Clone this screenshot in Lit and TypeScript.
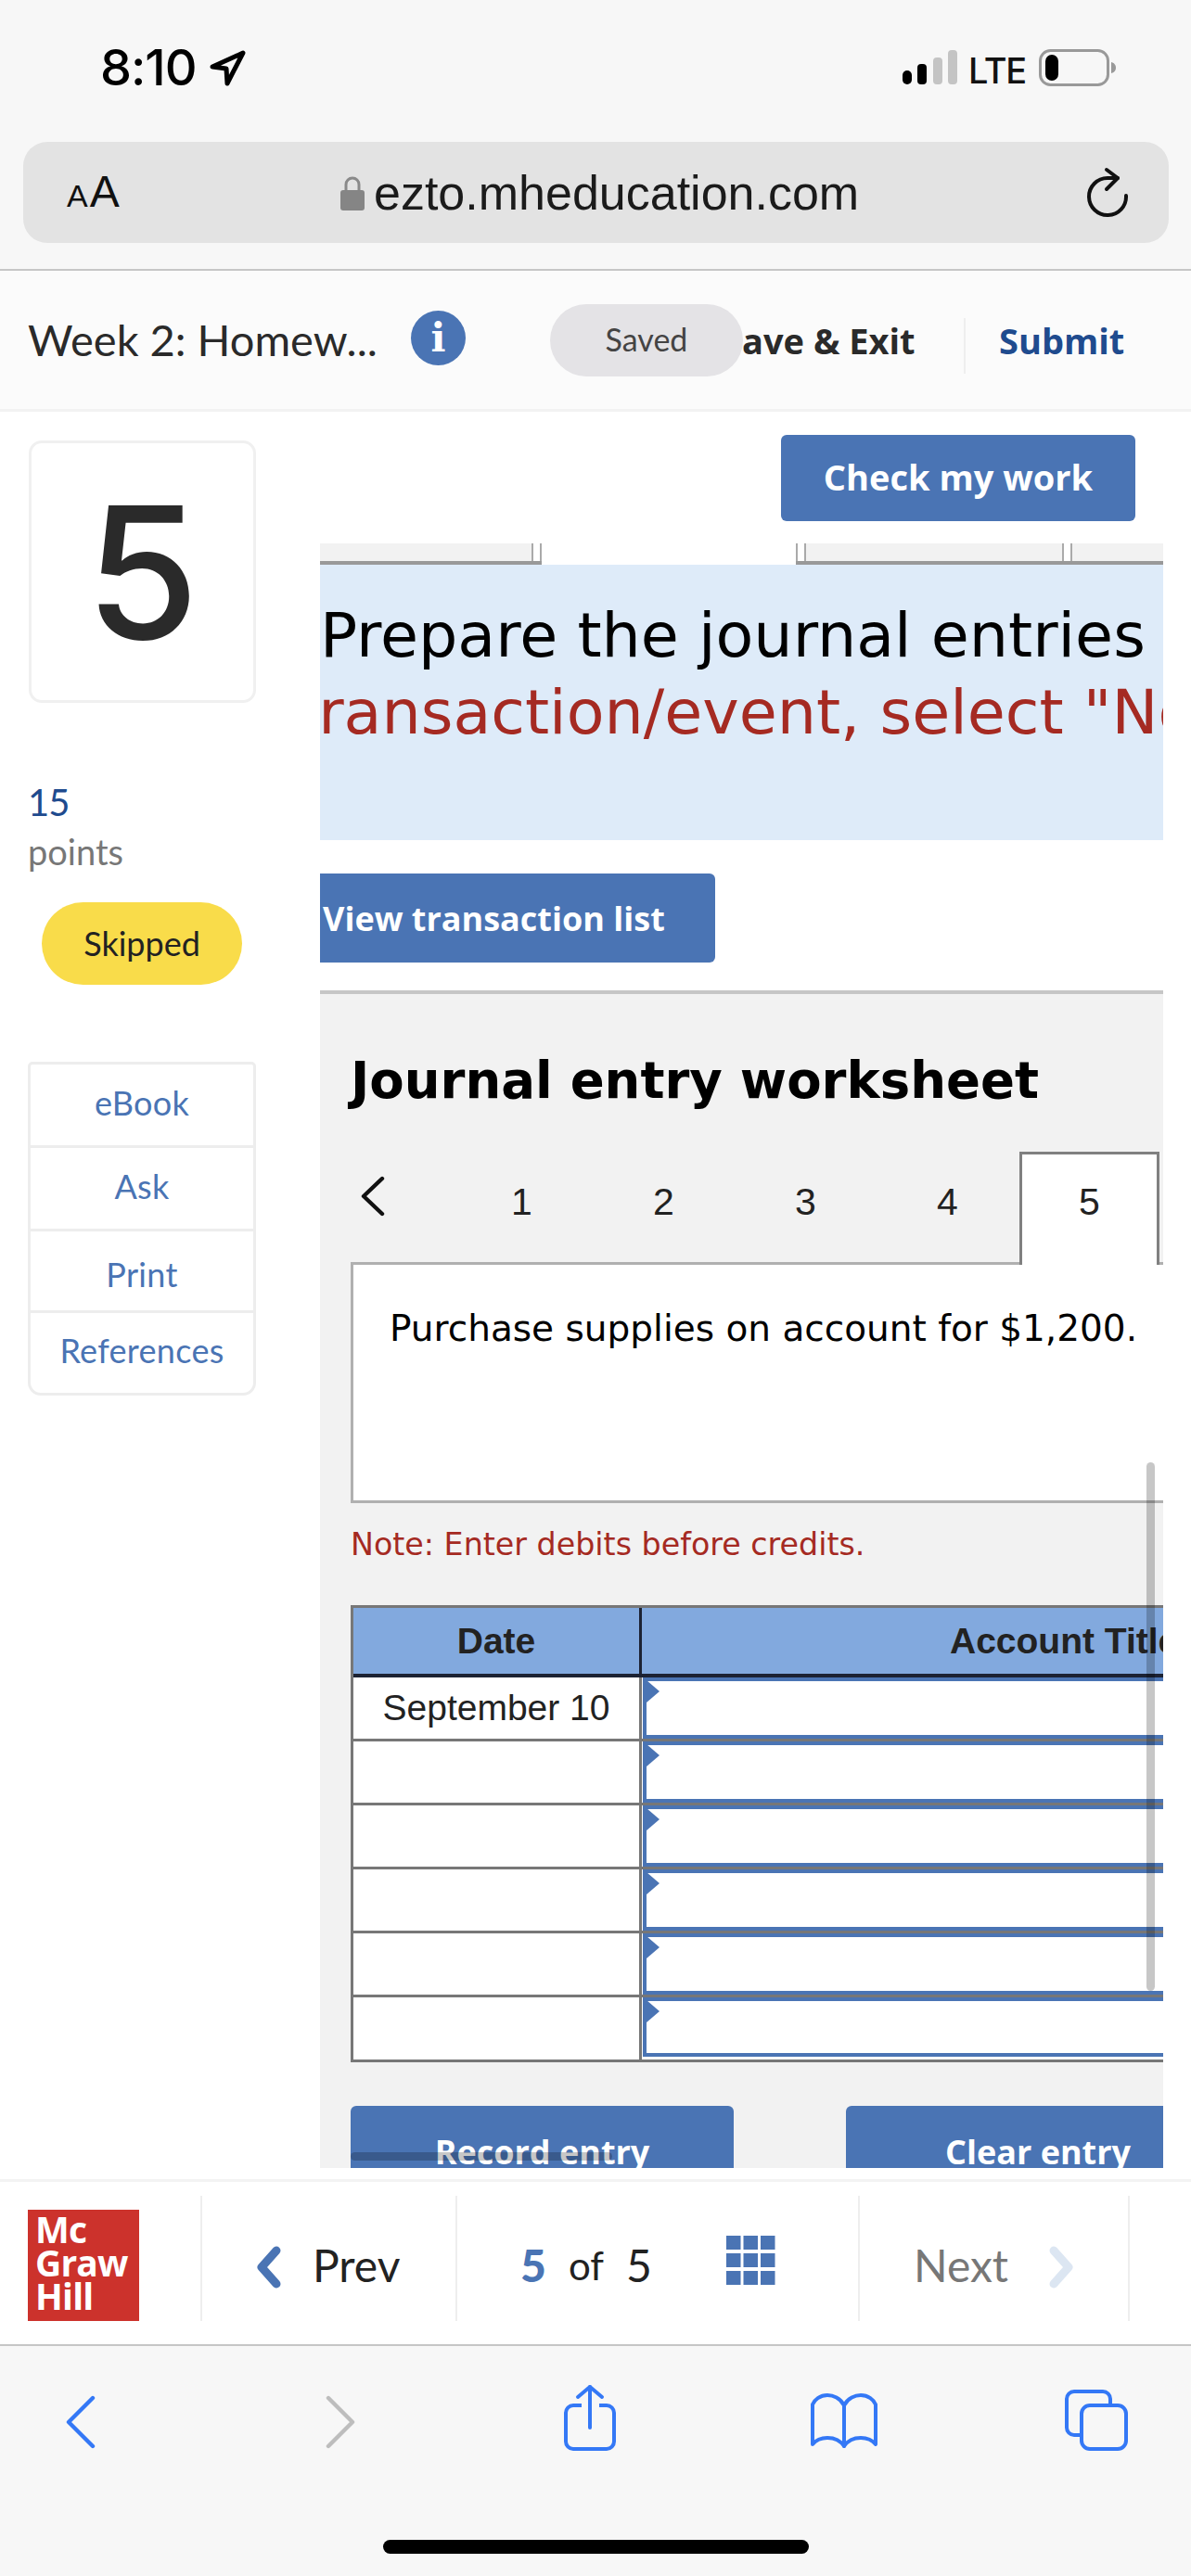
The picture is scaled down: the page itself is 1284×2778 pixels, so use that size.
import { LitElement, html, css, svg } from "lit";
import { customElement } from "lit/decorators.js";

@customElement("app-root")
export class AppRoot extends LitElement {
  static styles = css`
    :host { display: block; width: 1284px; height: 2778px; overflow: hidden; background: #fff; font-family: "Inter", "Liberation Sans", sans-serif; color: #222; }
    * { box-sizing: border-box; }
    svg { display: block; flex: none; }

    .chrome-top { height: 292px; background: #f7f7f7; border-bottom: 2px solid #c6c6c6; padding: 53px 24px 0 25px; }
    .status { height: 100px; display: flex; align-items: flex-start; position: relative; }
    .time { margin-left: 83px; font-size: 54px; line-height: 40px; font-weight: 500; letter-spacing: -1px; color: #000; width: 116px; }
    .status-right { margin-left: auto; margin-right: 56px; display: flex; align-items: flex-start; }
    .lte { font-size: 38px; font-weight: 500; line-height: 40px; margin: 3px 14px 0 11px; width: 62px; color: #111; letter-spacing: -1.2px; white-space: nowrap; }
    .url { height: 109px; background: #e3e3e3; border-radius: 26px; display: flex; align-items: center; position: relative; padding-left: 47px; }
    .aa { width: 295px; font-family: "Liberation Sans", sans-serif; color: #111; font-size: 48px; line-height: 50px; margin-top: 2px; }
    .aa small { font-size: 34px; margin-right: 2px; }
    .domain { font-size: 52px; margin-left: 10px; color: #1b1b1b; flex: 1; line-height: 60px; font-family: "Liberation Sans", sans-serif; }

    .appbar { height: 152px; background: #fbfbfb; border-bottom: 3px solid #f2f2f2; display: flex; align-items: center; position: relative; padding: 0 0 0 30px; }
    .title { font-family: "Lato", sans-serif; font-size: 47px; width: 413px; margin-top: -2px; color: #2a2a2a; white-space: nowrap; }
    .info { width: 59px; height: 59px; border-radius: 50%; background: #4a74b4; color: #fff; font-family: "DejaVu Serif", serif; font-weight: 700; font-size: 42px; display: flex; align-items: center; justify-content: center; margin-top: -4px; }
    .save { position: absolute; left: 800px; top: 55px; font-family: "Open Sans", sans-serif; font-weight: 700; font-size: 38px; line-height: 40px; white-space: nowrap; color: #2a2a2a; }
    .pill-saved { position: absolute; left: 593px; top: 36px; width: 208px; height: 78px; border-radius: 39px; background: #e4e3e6; font-family: "Lato", sans-serif; font-size: 34px; color: #444; display: flex; align-items: center; justify-content: center; padding-bottom: 4px; }
    .vsep { position: absolute; left: 1039px; top: 51px; width: 2px; height: 60px; background: #eee; }
    .submit { position: absolute; left: 1077px; top: 55px; font-family: "Open Sans", sans-serif; font-weight: 700; font-size: 38px; line-height: 40px; color: #1f4b8e; }

    .main { height: 1906px; display: flex; padding: 25px 30px 0 31px; }
    .side { width: 245px; margin-right: 69px; display: flex; flex-direction: column; }
    .qnum { height: 283px; margin-top: 6px; border: 3px solid #f0f0f0; border-radius: 14px; display: flex; align-items: center; justify-content: center; font-size: 198px; line-height: 200px; font-family: "Inter", sans-serif; font-weight: 500; color: #2a2a2a; }
    .pts { margin: 84px 0 0 -1px; font-family: "Lato", sans-serif; font-size: 40px; letter-spacing: -1px; line-height: 46px; color: #1f4b8e; }
    .ptl { margin: 7px 0 0 -1px; font-family: "Lato", sans-serif; font-size: 38px; line-height: 46px; color: #777; }
    .skipped { margin: 32px 0 0 14px; width: 216px; height: 89px; border-radius: 45px; background: #f9dc4a; display: flex; align-items: center; justify-content: center; padding-bottom: 2px; font-family: "Lato", sans-serif; font-size: 36px; color: #222; }
    .navlist { margin-top: 83px; border: 3px solid #ededed; border-radius: 5px 5px 14px 14px; display: flex; flex-direction: column; margin-left: -1px; width: 246px; }
    .navlist div { height: 90px; display: flex; align-items: center; justify-content: center; font-family: "Lato", sans-serif; font-size: 36px; letter-spacing: .3px; color: #4a74b4; border-bottom: 3px solid #ededed; padding-bottom: 6px; }
    .navlist div:nth-child(3) { height: 88px; padding: 6px 0 0; }
    .navlist div:last-child { border-bottom: 0; height: 86px; padding-bottom: 6px; }

    .col { width: 909px; display: flex; flex-direction: column; position: relative; overflow: hidden; }
    .checkrow { display: flex; justify-content: flex-end; padding-right: 30px; height: 117px; flex: none; }
    .btn { background: #4a74b4; color: #fff; border-radius: 6px; font-family: "Open Sans", sans-serif; font-weight: 700; display: flex; justify-content: center; align-items: center; flex: none; }
    .check { width: 382px; height: 93px; font-size: 38px; padding-bottom: 4px; }
    .stubs { height: 23px; flex: none; display: flex; }
    .stub { background: #f2f2f2; border-bottom: 4px solid #999; position: relative; }
    .stub.a { width: 239px; }
    .stub.gap { width: 274px; background: #fff; border: 0; }
    .stub.b { flex: 1; }
    .tick { position: absolute; top: 0; bottom: 0; width: 11px; border-left: 2px solid #aaa; border-right: 2px solid #aaa; background: #fff; }
    .band { height: 297px; flex: none; background: #deebf9; font-family: "DejaVu Sans", sans-serif; font-size: 66.7px; line-height: 83px; white-space: nowrap; overflow: hidden; padding-top: 35px; color: #000; }
    .band .red { color: #a52a22; margin-left: -28px; }
    .view { margin-top: 36px; width: 426px; height: 96px; font-size: 36px; justify-content: flex-start; padding-left: 3px; border-radius: 0 6px 6px 0; }
    .panel { flex: none; margin-top: 30px; height: 1270px; border-top: 4px solid #c6c6c6; background: #f2f2f2; padding: 0 0 0 33px; display: flex; flex-direction: column; position: relative; overflow: hidden; }
    .ws { font-family: "DejaVu Sans", sans-serif; font-weight: 700; font-size: 54.5px; line-height: 66px; margin-top: 60px; color: #000; white-space: nowrap; }
    .tabs { display: flex; margin-top: 44px; height: 119px; flex: none; align-items: stretch; position: relative; }
    .chev { width: 50px; padding: 26px 0 0 9px; }
    .tab { width: 153px; flex: none; font-family: "Liberation Sans", sans-serif; font-size: 41px; line-height: 41px; padding-top: 34px; text-align: center; color: #222; }
    .tabs .t1 { margin-left: 58px; }
    .tab.on { background: #fff; border: 3px solid #808080; border-bottom: 0; width: 151px; padding-top: 31px; position: relative; z-index: 1; margin: 0 0 -3px 1px; }
    .prompt { height: 260px; flex: none; background: #fff; border: 3px solid #b0b0b0; border-right: 0; padding: 47px 0 0 39px; font-family: "DejaVu Sans", sans-serif; font-size: 39px; line-height: 44px; color: #000; white-space: nowrap; }
    .note { font-family: "DejaVu Sans", sans-serif; font-size: 33.3px; line-height: 40px; margin-top: 25px; color: #a52a22; white-space: nowrap; }
    .tbl { margin-top: 45px; flex: none; width: 1000px; border: 3px solid #777; border-right: 0; font-family: "Liberation Sans", sans-serif; font-size: 39px; color: #222; }
    .tr { display: flex; height: 69px; border-bottom: 3px solid #777; background: #fff; }
    .tr:last-child { height: 67px; border-bottom: 0; }
    .tr.hd { height: 75px; background: #82a9de; border-bottom: 4px solid #1c2233; font-weight: 700; }
    .c1 { width: 311px; flex: none; display: flex; align-items: center; justify-content: center; border-right: 3px solid #777; }
    .hd .c1 { border-right-color: #1c2233; }
    .c2 { flex: 1; position: relative; }
    .hd .c2 { padding-left: 332px; display: flex; align-items: center; white-space: nowrap; }
    .inp { position: absolute; left: 1px; right: 0; top: 0; bottom: 0; border: 4px solid #4a74b4; border-right: 0; }
    .tr:last-child .inp { bottom: 3px; }
    .tri { position: absolute; left: 5px; top: 3px; width: 0; height: 0; border-left: 14px solid #4a74b4; border-top: 12px solid transparent; border-bottom: 12px solid transparent; }
    .actions { display: flex; margin-top: 47px; flex: none; }
    .act { height: 90px; align-items: flex-start; padding-top: 25px; font-size: 36px; line-height: 50px; }
    .act.r { width: 413px; margin-right: 121px; }
    .act.c { width: 400px; justify-content: flex-start; padding-left: 107px; }
    .vbar { position: absolute; left: 891px; top: 505px; width: 9px; height: 570px; border-radius: 5px; background: rgba(0,0,0,.22); }
    .hbar { position: absolute; left: 33px; top: 1249px; width: 282px; height: 9px; border-radius: 5px; background: rgba(0,0,0,.22); }

    .foot { height: 178px; border-top: 3px solid #f3f3f3; display: flex; position: relative; background: #fff; }
    .logo { position: absolute; left: 30px; top: 30px; width: 120px; height: 120px; background: #cc322c; color: #fff; font-family: "Open Sans", sans-serif; font-weight: 700; font-size: 39px; padding: 3px 0 0 8px; letter-spacing: -.8px; }
    .logo div { height: 36px; line-height: 36px; }
    .fsep { position: absolute; top: 15px; width: 2px; height: 135px; background: #eee; }
    .ftext { position: absolute; top: 62px; font-family: "Lato", sans-serif; font-size: 48px; line-height: 56px; white-space: nowrap; }
    .ftext.prev { left: 337px; color: #222; }
    .ftext.cur { left: 561px; color: #4a74b4; font-weight: 900; }
    .ftext.of { left: 613px; color: #222; font-size: 42px; }
    .ftext.tot { left: 675px; color: #222; }
    .ftext.next { left: 985px; color: #777; }
    .fic { position: absolute; }
    .chrome-bot { height: 250px; background: #f7f7f7; border-top: 2px solid #c6c6c6; position: relative; }
    .sic { position: absolute; }
    .home { position: absolute; left: 413px; top: 209px; width: 459px; height: 15px; border-radius: 8px; background: #000; }
  `;

  render() {
    const rows = ["September 10", "", "", "", "", ""];
    return html`
      <div class="chrome-top">
        <div class="status">
          <div class="time">8:10</div>
          <svg width="42" height="40" viewBox="0 0 42 40" style="margin-top:1px"><path d="M5 18 L38 3 L21 36 L20 20 Z" fill="none" stroke="#000" stroke-width="5" stroke-linejoin="round"/></svg>
          <div class="status-right">
            <svg width="60" height="40" viewBox="0 0 60 40"><rect x="0" y="23" width="10" height="15" rx="5" fill="#000"/><rect x="16" y="16" width="10" height="22" rx="4" fill="#000"/><rect x="33" y="9" width="10" height="29" rx="4" fill="#c4c4c4"/><rect x="49" y="1" width="10" height="37" rx="4" fill="#c4c4c4"/></svg>
            <div class="lte">LTE</div>
            <svg width="84" height="41" viewBox="0 0 84 41"><rect x="1.5" y="1.5" width="73" height="37" rx="11" fill="none" stroke="#999" stroke-width="3"/><rect x="7" y="6" width="14" height="28" rx="7" fill="#000"/><path d="M78 14 C82 15 83 18 83 20 C83 22 82 25 78 26 Z" fill="#999"/></svg>
          </div>
        </div>
        <div class="url">
          <div class="aa"><small>A</small>A</div>
          <svg width="26" height="38" viewBox="0 0 26 38"><path d="M6 17 V10 a7 7 0 0 1 14 0 V17" fill="none" stroke="#8a8a8a" stroke-width="3"/><rect x="0" y="16" width="26" height="22" rx="3" fill="#858585"/></svg>
          <div class="domain">ezto.mheducation.com</div>
          <svg width="46" height="56" viewBox="0 0 46 56" style="margin-right:42px" fill="none" stroke="#111" stroke-width="4" stroke-linecap="round" stroke-linejoin="round"><path d="M33 12 H22 A20 20 0 1 0 42 31"/><path d="M21 3 L33 12 L21 24"/></svg>
        </div>
      </div>

      <div class="appbar">
        <div class="title">Week 2: Homew...</div>
        <div class="info">i</div>
        <div class="save">ave &amp; Exit</div>
        <div class="pill-saved">Saved</div>
        <div class="vsep"></div>
        <div class="submit">Submit</div>
      </div>

      <div class="main">
        <div class="side">
          <div class="qnum">5</div>
          <div class="pts">15</div>
          <div class="ptl">points</div>
          <div class="skipped">Skipped</div>
          <div class="navlist"><div>eBook</div><div>Ask</div><div>Print</div><div>References</div></div>
        </div>
        <div class="col">
          <div class="checkrow"><div class="btn check">Check my work</div></div>
          <div class="stubs">
            <div class="stub a"><div class="tick" style="right:0"></div></div>
            <div class="stub gap"></div>
            <div class="stub b"><div class="tick" style="left:0"></div><div class="tick" style="left:287px"></div></div>
          </div>
          <div class="band">
            <div>Prepare the journal entries</div>
            <div class="red">transaction/event, select "No</div>
          </div>
          <div class="btn view">View transaction list</div>
          <div class="panel">
            <div class="ws">Journal entry worksheet</div>
            <div class="tabs">
              <div class="chev"><svg width="30" height="44" viewBox="0 0 30 44"><path d="M25 3 L5 22 L25 41" fill="none" stroke="#111" stroke-width="4.4" stroke-linecap="round" stroke-linejoin="round"/></svg></div>
              <div class="tab t1">1</div><div class="tab">2</div><div class="tab">3</div><div class="tab">4</div><div class="tab on">5</div>
            </div>
            <div class="prompt">Purchase supplies on account for $1,200.</div>
            <div class="note">Note: Enter debits before credits.</div>
            <div class="tbl">
              <div class="tr hd"><div class="c1">Date</div><div class="c2">Account Title</div></div>
              ${rows.map((r) => html`<div class="tr"><div class="c1">${r}</div><div class="c2"><div class="inp"></div><div class="tri"></div></div></div>`)}
            </div>
            <div class="actions">
              <div class="btn act r">Record entry</div>
              <div class="btn act c">Clear entry</div>
            </div>
            <div class="vbar"></div>
            <div class="hbar"></div>
          </div>
        </div>
      </div>

      <div class="foot">
        <div class="logo"><div>Mc</div><div>Graw</div><div>Hill</div></div>
        <div class="fsep" style="left:216px"></div>
        <div class="fsep" style="left:491px"></div>
        <div class="fsep" style="left:925px"></div>
        <div class="fsep" style="left:1216px"></div>
        <svg class="fic" style="left:274px;top:69px" width="32" height="46" viewBox="0 0 32 46"><path d="M24 5 L8 23 L24 41" fill="none" stroke="#4a74b4" stroke-width="9" stroke-linecap="round" stroke-linejoin="round"/></svg>
        <div class="ftext prev">Prev</div>
        <div class="ftext cur">5</div>
        <div class="ftext of">of</div>
        <div class="ftext tot">5</div>
        <svg class="fic" style="left:783px;top:58px" width="53" height="53" viewBox="0 0 53 53" fill="#4a74b4">
          ${[0, 19, 38].map((y) => [0, 18.5, 37].map((x) => svg`<rect x=${x} y=${y} width="15.5" height="15"/>`))}
        </svg>
        <div class="ftext next">Next</div>
        <svg class="fic" style="left:1128px;top:69px" width="32" height="46" viewBox="0 0 32 46"><path d="M8 5 L24 23 L8 41" fill="none" stroke="#dce6f2" stroke-width="9" stroke-linecap="round" stroke-linejoin="round"/></svg>
      </div>

      <div class="chrome-bot">
        <svg class="sic" style="left:70px;top:53px" width="34" height="58" viewBox="0 0 34 58"><path d="M30 3 L4 29 L30 55" fill="none" stroke="#3478f6" stroke-width="4.4" stroke-linecap="round" stroke-linejoin="round"/></svg>
        <svg class="sic" style="left:350px;top:53px" width="34" height="58" viewBox="0 0 34 58"><path d="M4 3 L30 29 L4 55" fill="none" stroke="#bdbdbd" stroke-width="4.4" stroke-linecap="round" stroke-linejoin="round"/></svg>
        <svg class="sic" style="left:606px;top:41px" width="60" height="74" viewBox="0 0 60 74" fill="none" stroke="#3478f6" stroke-width="4" stroke-linejoin="round"><path d="M21 23 H12 a8 8 0 0 0 -8 8 V62 a8 8 0 0 0 8 8 H48 a8 8 0 0 0 8 -8 V31 a8 8 0 0 0 -8 -8 H40"/><path d="M30 47 V3" stroke-linecap="round"/><path d="M17 14 L30 3 L43 14" stroke-linecap="round"/></svg>
        <svg class="sic" style="left:874px;top:51px" width="72" height="60" viewBox="0 0 72 60" fill="none" stroke="#3478f6" stroke-width="4" stroke-linecap="round" stroke-linejoin="round"><path d="M36 13 C32 5 24 2 18 2 C10 2 4 7 2 12 V55 C6 50 12 48 18 48 C26 48 32 51 36 57 C40 51 46 48 54 48 C60 48 66 50 70 55 V12 C68 7 62 2 54 2 C48 2 40 5 36 13 Z"/><path d="M36 13 V57"/></svg>
        <svg class="sic" style="left:1147px;top:46px" width="70" height="70" viewBox="0 0 70 70" fill="none" stroke="#3478f6" stroke-width="4" stroke-linejoin="round"><path d="M19 50 H11 a8 8 0 0 1 -8 -8 V11 a8 8 0 0 1 8 -8 H42 a8 8 0 0 1 8 8 V18"/><rect x="19" y="18" width="48" height="47" rx="9"/></svg>
        <div class="home"></div>
      </div>
    `;
  }
}
